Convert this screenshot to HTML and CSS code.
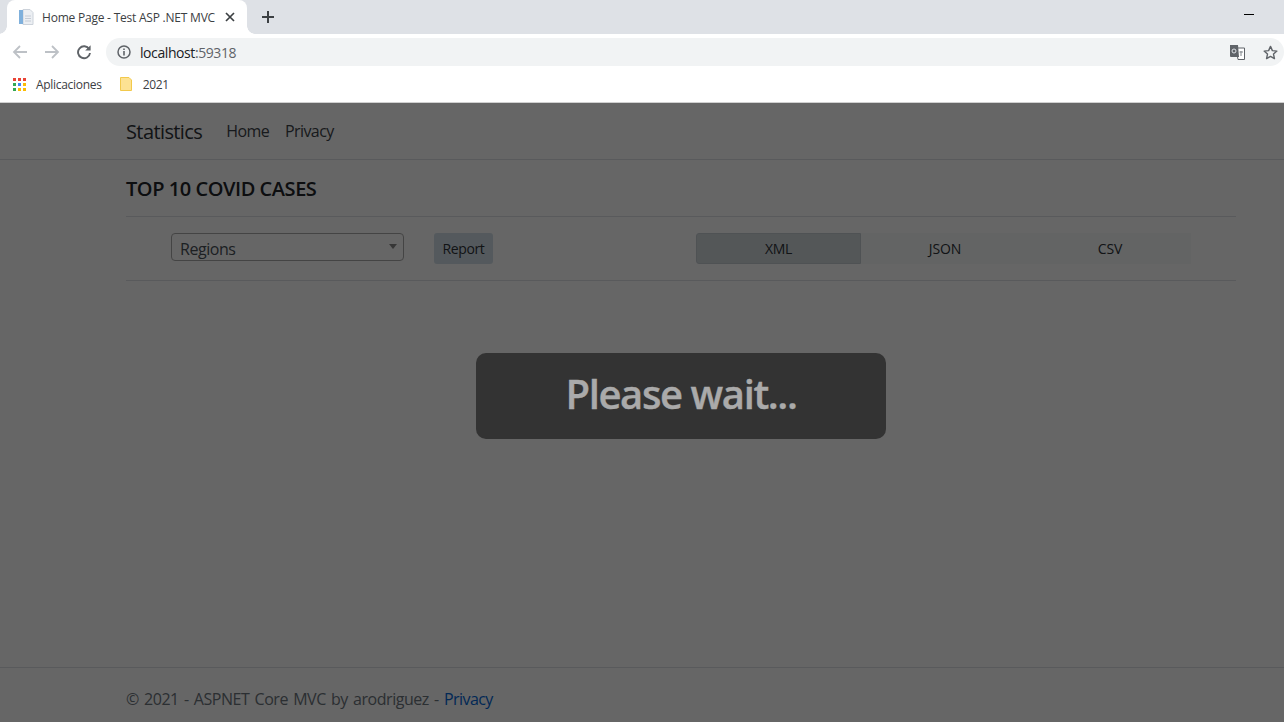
FILE: index.html
```html
<!DOCTYPE html>
<html lang="en">
<head>
<meta charset="utf-8">
<title>Home Page - Test ASP .NET MVC</title>
<link rel="stylesheet" href="styles.css">
</head>
<body>
<div class="browser">
  <div class="tabstrip">
    <div class="tab">
      <svg class="favicon" width="16" height="16" viewBox="0 0 16 16"><path d="M5 .5h7l3 3v12H5z" fill="#eceff3" stroke="#ccd2da"/><rect x="1" y="1" width="4" height="14" fill="#7fb0dc"/><path d="M7 7h6M7 9.500h6M7 12h6" stroke="#c5ccd6"/></svg>
      <span class="tab-title">Home Page - Test ASP .NET MVC</span>
      <svg class="tab-close" width="10" height="10" viewBox="0 0 10 10"><path d="M1 1l8 8M9 1l-8 8" stroke="#3c4043" stroke-width="1.7"/></svg>
    </div>
    <svg class="new-tab" width="14" height="14" viewBox="0 0 14 14"><path d="M7 1v12M1 7h12" stroke="#3c4043" stroke-width="2"/></svg>
    <div class="window-min"></div>
  </div>
  <div class="toolbar">
    <svg class="tool" width="16" height="16" viewBox="0 0 16 16"><path d="M15 8H2M8 2L2 8l6 6" fill="none" stroke="#bdc1c6" stroke-width="1.8"/></svg>
    <svg class="tool" width="16" height="16" viewBox="0 0 16 16"><path d="M1 8h13M8 2l6 6-6 6" fill="none" stroke="#bdc1c6" stroke-width="1.8"/></svg>
    <svg class="tool" width="16" height="16" viewBox="0 0 16 16"><path d="M13.200 5.200A6 6 0 1 0 14 9" fill="none" stroke="#5f6368" stroke-width="1.900"/><path d="M14.600 1.200v5.400H9.200z" fill="#5f6368"/></svg>
    <div class="omnibox">
      <svg class="info" width="14" height="14" viewBox="0 0 14 14"><circle cx="7" cy="7" r="6" fill="none" stroke="#5f6368" stroke-width="1.500"/><path d="M7 6v4.400M7 3.400v1.600" stroke="#5f6368" stroke-width="1.600"/></svg>
      <span class="host">localhost</span><span class="port">:59318</span>
      <svg class="translate" width="15" height="15" viewBox="0 0 15 15"><path d="M6 3h8.500v11.500H8z" fill="#fff" stroke="#5f6368"/><path d="M0 0h8l1 12H1a1 1 0 0 1-1-1z" fill="#5f6368"/><circle cx="4" cy="6" r="2" fill="none" stroke="#dee1e6"/><path d="M9.500 7h3.500M11 6v5" stroke="#80868b"/></svg>
      <svg class="star" width="15" height="15" viewBox="0 0 16 16"><path d="M8 1.500l2 4.500 4.800.5-3.600 3.200 1 4.800L8 12.100 3.800 14.500l1-4.800L1.200 6.500 6 6z" fill="none" stroke="#5f6368" stroke-width="1.500" stroke-linejoin="round"/></svg>
    </div>
  </div>
  <div class="bookmarks">
    <svg class="apps" width="13" height="13" viewBox="0 0 13 13">
      <rect x="0" y="0" width="3" height="3" fill="#ea4335"/><rect x="5" y="0" width="3" height="3" fill="#ea4335"/><rect x="10" y="0" width="3" height="3" fill="#ea4335"/>
      <rect x="0" y="5" width="3" height="3" fill="#34a853"/><rect x="5" y="5" width="3" height="3" fill="#4285f4"/><rect x="10" y="5" width="3" height="3" fill="#fbbc04"/>
      <rect x="0" y="10" width="3" height="3" fill="#34a853"/><rect x="5" y="10" width="3" height="3" fill="#fbbc04"/><rect x="10" y="10" width="3" height="3" fill="#fbbc04"/>
    </svg>
    <span class="bm-label">Aplicaciones</span>
    <svg class="folder" width="12" height="14" viewBox="0 0 12 14"><path d="M.5 .5h8.500l2.500 2.500v10.500H.5z" fill="#fde293" stroke="#f2c94c"/></svg>
    <span class="bm-label">2021</span>
  </div>
</div>
<div class="page">
  <header class="navbar">
    <div class="container nav-row">
      <a class="brand">Statistics</a>
      <a class="nav-link">Home</a>
      <a class="nav-link">Privacy</a>
    </div>
  </header>
  <main class="container main">
    <h1 class="title">TOP 10 COVID CASES</h1>
    <div class="controls">
      <div class="select"><span class="select-value">Regions</span><i class="caret"></i></div>
      <button class="report">Report</button>
      <div class="formats">
        <span class="fmt fmt-active">XML</span>
        <span class="fmt">JSON</span>
        <span class="fmt">CSV</span>
      </div>
    </div>
  </main>
  <footer class="footer">
    <div class="container">© 2021 - ASPNET Core MVC by arodriguez - <a class="link">Privacy</a></div>
  </footer>
  <div class="overlay"></div>
  <div class="wait">Please wait...</div>
</div>
</body>
</html>
```
FILE: styles.css
```css
* { box-sizing: border-box; }
html, body { margin: 0; height: 100%; overflow: hidden; }
body { width: 1284px; height: 722px; display: flex; flex-direction: column; font-family: "Open Sans", "Noto Sans", sans-serif; background: #fff; color: #212529; }

.browser { flex: none; height: 103px; display: flex; flex-direction: column; border-bottom: 1px solid #d0d0d0; }
.tabstrip { height: 34px; background: #dee1e6; display: flex; align-items: center; padding-left: 7px; }
.tab { position: relative; width: 240px; height: 34px; background: #fff; border-radius: 8px 8px 0 0; display: flex; align-items: center; padding-left: 11px; }
.tab::before, .tab::after { content: ""; position: absolute; bottom: 0; width: 8px; height: 8px; }
.tab::before { left: -8px; background: radial-gradient(circle at 0 0, transparent 7.500px, #fff 8px); }
.tab::after { right: -8px; background: radial-gradient(circle at 100% 0, transparent 7.500px, #fff 8px); }
.favicon { flex: none; margin-right: 8px; }
.tab-title { font-size: 12px; letter-spacing: -.22px; color: #3c4043; white-space: nowrap; flex: 1; }
.tab-close { flex: none; margin-right: 12px; }
.new-tab { margin-left: 14px; }
.window-min { width: 10px; height: 1px; background: #000; margin-left: auto; margin-right: 30px; margin-top: -6px; }

.toolbar { height: 34px; background: #fff; display: flex; align-items: center; padding: 2px 0 0 12px; }
.tool { flex: none; margin-right: 16px; }
.omnibox { flex: 1; height: 28px; margin-left: -2px; background: #f1f3f4; border-radius: 14px; display: flex; align-items: center; padding-left: 11px; font-size: 14px; letter-spacing: -.42px; }
.info { margin-right: 9px; flex: none; }
.host { color: #202124; }
.port { color: #5f6368; }
.translate { margin-left: auto; margin-right: 18px; flex: none; }
.star { margin-right: 6px; flex: none; }

.bookmarks { height: 34px; background: #fff; display: flex; align-items: center; padding: 0 0 2px 13px; font-size: 12px; letter-spacing: -.3px; color: #3c4043; }
.apps { margin-right: 10px; flex: none; }
.folder { margin: 0 11px 0 18px; flex: none; }
.bm-label { white-space: nowrap; }

.page { position: relative; flex: 1; display: flex; flex-direction: column; font-size: 16px; overflow: hidden; }
.container { width: 1140px; margin-left: 111px; padding: 0 15px; }
.navbar { height: 57px; border-bottom: 1px solid #dee2e6; display: flex; align-items: center; }
.nav-row { display: flex; align-items: center; letter-spacing: -.6px; color: #3d4349; }
.brand { font-size: 20px; margin-right: 24px; color: #2d3237; }
.nav-link { margin-right: 16px; }
.main { flex: 1; }
.title { margin: 0; height: 57px; border-bottom: 1px solid #dee2e6; font-size: 20px; font-weight: 600; line-height: 57px; letter-spacing: -.45px; }
.controls { height: 64px; border-bottom: 1px solid #dee2e6; display: flex; align-items: flex-start; padding: 16px 0 0 45px; }
.select { width: 233px; height: 28px; border: 1px solid #aaa; border-radius: 4px; padding-left: 8px; display: flex; align-items: center; justify-content: space-between; color: #495057; letter-spacing: -.45px; }
.select-value { padding-top: 4px; }
.caret { width: 0; height: 0; border: 4.500px solid transparent; border-top: 5px solid #888; border-bottom: 0; margin: 0 6px 2px 0; }
.report { width: 59px; height: 31px; margin-left: 30px; padding: 0; border: 0; border-radius: 3px; background: #d2dfe9; color: #2d3237; font: 14px "Open Sans", sans-serif; letter-spacing: -.4px; }
.formats { display: flex; margin-left: 203px; }
.fmt { width: 165px; height: 31px; padding-left: 3px; background: #f8f9fa; color: #2d3237; font-size: 14px; letter-spacing: -.15px; display: flex; align-items: center; justify-content: center; }
.fmt-active { padding-left: 0; background: #d3d9dd; border-radius: 3px 0 0 3px; border: 1px solid #c6cdd3; letter-spacing: -.4px; }
.footer { height: 55px; border-top: 1px solid #dee2e6; display: flex; align-items: center; color: #6c757d; letter-spacing: -.45px; word-spacing: 1.450px; }
.footer .container { padding-top: 8px; }
.link { color: #0366d6; letter-spacing: -.55px; }

.overlay { position: absolute; inset: 0; background: rgba(0, 0, 0, .6); }
.wait { position: absolute; left: 476px; top: 250px; width: 410px; height: 86px; padding-bottom: 6px; border-radius: 10px; background: #333; color: #aaa; font-size: 40px; font-weight: 600; font-stretch: 92%; letter-spacing: -1.4px; -webkit-text-stroke: .4px #aaa; display: flex; align-items: center; justify-content: center; }
```
